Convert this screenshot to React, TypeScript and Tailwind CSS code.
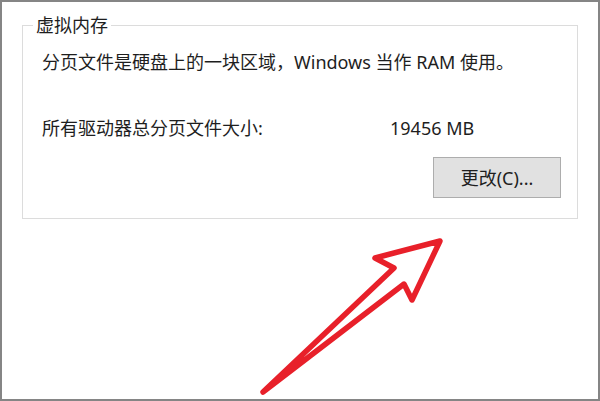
export default function App() {
  const font = { fontFamily: "'Noto Sans', 'Noto Sans CJK SC', sans-serif" };

  return (
    <div
      className="relative w-[600px] h-[401px] bg-white border-2 border-[#858585] overflow-hidden text-[#1e1e1e]"
      style={font}
    >
      {/* 虚拟内存 group */}
      <div className="relative ml-[20px] mt-[23px] w-[556px] h-[194px] border border-[#dcdcdc] pl-[19px] pr-[16px] pt-[25px]">
        <div className="absolute left-[10px] -top-[12px] bg-white px-[3px] text-[18px] leading-[22px]">
          虚拟内存
        </div>
        <div className="text-[18px] leading-[22px]">
          分页文件是硬盘上的一块区域，Windows 当作 RAM 使用。
        </div>
        <div className="flex mt-[44px] text-[18px] leading-[22px]">
          <div className="w-[348px]">所有驱动器总分页文件大小:</div>
          <div>19456 MB</div>
        </div>
        <div className="flex justify-end mt-[18px]">
          <button className="w-[128px] h-[41px] bg-[#e1e1e1] border border-[#adadad] text-[18px] leading-[22px] text-[#1e1e1e]">
            更改(C)...
          </button>
        </div>
      </div>

      {/* red annotation arrow */}
      <svg
        className="absolute left-0 top-0 w-[596px] h-[397px] pointer-events-none"
        viewBox="2 2 596 397"
      >
        <path
          d="M263 392 L394 268 L375 258 L440 241 L412 300 L404 284 Z"
          fill="none"
          stroke="#e8202a"
          strokeWidth="5.5"
          strokeLinejoin="round"
          strokeLinecap="round"
        />
      </svg>
    </div>
  );
}
